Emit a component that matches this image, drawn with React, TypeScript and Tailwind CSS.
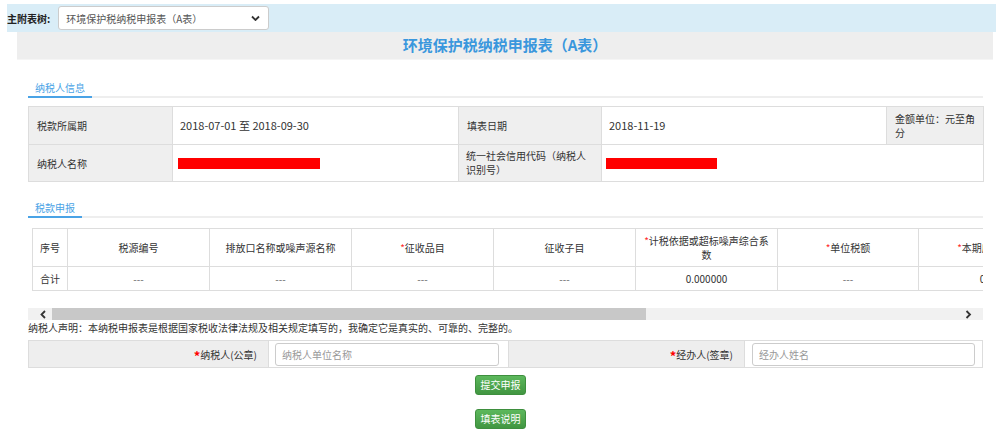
import React from "react";

const Req = () => <span className="text-[#ff2a2a]">*</span>;

const Chevron = ({ dir }: { dir: "down" | "left" | "right" }) => {
  const d = dir === "down" ? "M1 1.5l3.5 3.5 3.5-3.5" : dir === "left" ? "M5 1L1.5 4.5 5 8" : "M1.5 1L5 4.5 1.5 8";
  const vb = dir === "down" ? "0 0 9 6" : "0 0 7 9";
  return (
    <svg viewBox={vb} className={dir === "down" ? "w-[9px] h-[6px]" : "w-[7px] h-[9px]"}>
      <path d={d} fill="none" stroke="#333" strokeWidth="1.8" />
    </svg>
  );
};

const Tab = ({ label }: { label: string }) => (
  <div className="flex border-b-2 border-[#eeeeee]">
    <div className="-mb-[2px] h-[19px] px-[7px] border-b-2 border-[#4aa3e6] text-[10px] leading-[17px] text-[#4aa3e6]">
      {label}
    </div>
  </div>
);

const taxCols: { w: number; label: React.ReactNode; value: string }[] = [
  { w: 35, label: "序号", value: "合计" },
  { w: 142, label: "税源编号", value: "---" },
  { w: 142, label: "排放口名称或噪声源名称", value: "---" },
  { w: 142, label: <><Req />征收品目</>, value: "---" },
  { w: 142, label: "征收子目", value: "---" },
  { w: 142, label: <><Req />计税依据或超标噪声综合系数</>, value: "0.000000" },
  { w: 141, label: <><Req />单位税额</>, value: "---" },
  { w: 142, label: <><Req />本期应纳税额</>, value: "0.00" },
  { w: 142, label: "本期减免税额", value: "0.00" },
  { w: 142, label: "本期已缴税额", value: "0.00" },
];

export default function App() {
  return (
    <div className="w-[996px] h-[447px] overflow-hidden bg-white text-[#333] font-['Noto_Sans_CJK_SC',sans-serif]">
      {/* 主附表树 */}
      <div className="ml-[7px] mt-[4px] h-[28px] bg-[#d9edf7] flex items-center">
        <span className="text-[10px] font-bold text-[#222]">主附表树:</span>
        <div className="ml-[8px] w-[211px] h-[24px] bg-white border border-[#cccccc] rounded-[3px] flex items-center justify-between pl-[7px] pr-[8px] text-[10px] text-[#555]">
          <span>环境保护税纳税申报表（A表）</span>
          <Chevron dir="down" />
        </div>
      </div>

      {/* Title */}
      <div className="ml-[17px] w-[976px] h-[28px] bg-[#eeeeee] border-b border-[#f5f5f5] flex items-center justify-center text-[15px] font-bold text-[#3a97dd]">
        环境保护税纳税申报表（A表）
      </div>

      <div className="ml-[28px] w-[955px]">
        {/* 纳税人信息 */}
        <div className="mt-[19px]">
          <Tab label="纳税人信息" />
        </div>

        <table className="mt-[8px] w-[955px] table-fixed text-[10px]">
          <colgroup>
            <col className="w-[144px]" />
            <col className="w-[286px]" />
            <col className="w-[143px]" />
            <col className="w-[285px]" />
            <col className="w-[97px]" />
          </colgroup>
          <tbody>
            <tr className="h-[38px]">
              <td className="border border-[#dddddd] bg-[#efefef] px-[8px]">税款所属期</td>
              <td className="border border-[#dddddd] px-[7px] text-[11px]">2018-07-01 至 2018-09-30</td>
              <td className="border border-[#dddddd] bg-[#efefef] px-[8px]">填表日期</td>
              <td className="border border-[#dddddd] px-[7px] text-[11px]">2018-11-19</td>
              <td className="border border-[#dddddd] bg-[#efefef] px-[8px] leading-[14px]">金额单位：元至角分</td>
            </tr>
            <tr className="h-[37px]">
              <td className="border border-[#dddddd] bg-[#efefef] px-[8px]">纳税人名称</td>
              <td className="border border-[#dddddd] px-[5px]">
                <div className="w-[142px] h-[11px] bg-[#ff0000]" />
              </td>
              <td className="border border-[#dddddd] bg-[#efefef] px-[7px] leading-[14px]">统一社会信用代码（纳税人识别号）</td>
              <td colSpan={2} className="border border-[#dddddd] px-[4px]">
                <div className="w-[111px] h-[11px] bg-[#ff0000]" />
              </td>
            </tr>
          </tbody>
        </table>

        {/* 税款申报 */}
        <div className="mt-[17px]">
          <Tab label="税款申报" />
        </div>

        <div className="mt-[10px] pl-[4px] overflow-hidden">
          <table className="w-[1312px] table-fixed text-[10px] text-center">
            <colgroup>
              {taxCols.map((c, i) => (
                <col key={i} style={{ width: c.w }} />
              ))}
            </colgroup>
            <tbody>
              <tr className="h-[38px]">
                {taxCols.map((c, i) => (
                  <td key={i} className="border border-[#dddddd] px-[7px] leading-[14px]">
                    {c.label}
                  </td>
                ))}
              </tr>
              <tr className="h-[24px]">
                {taxCols.map((c, i) => (
                  <td key={i} className={`border border-[#dddddd] px-[4px] ${c.value === "---" ? "text-[#666]" : ""}`}>
                    {c.value}
                  </td>
                ))}
              </tr>
            </tbody>
          </table>
        </div>

        {/* scrollbar */}
        <div className="mt-[17px] h-[12px] bg-[#f1f1f1] flex items-center">
          <div className="w-[24px] h-full flex items-center justify-center pl-[6px]">
            <Chevron dir="left" />
          </div>
          <div className="w-[594px] h-full bg-[#c8c8c8]" />
          <div className="flex-1" />
          <div className="w-[24px] h-full flex items-center justify-center pr-[6px]">
            <Chevron dir="right" />
          </div>
        </div>

        <p className="mt-[1px] text-[10px] leading-[13px]">
          纳税人声明：本纳税申报表是根据国家税收法律法规及相关规定填写的，我确定它是真实的、可靠的、完整的。
        </p>

        {/* 签章 */}
        <div className="mt-[6px] grid grid-cols-[239px_240px_236px_240px] h-[28px] border border-[#dddddd] text-[10px]">
          <div className="bg-[#eeeeee] flex items-center justify-end pr-[11px]">
            <span className="text-[#ff0000] font-bold text-[13px] leading-none mt-[3px]">*</span>
            <span>纳税人(公章)</span>
          </div>
          <div className="border-l border-[#dddddd] pl-[6px] pr-[9px] flex items-center">
            <div className="w-full h-[23px] border border-[#cccccc] rounded-[3px] flex items-center pl-[6px] text-[#999]">
              纳税人单位名称
            </div>
          </div>
          <div className="border-l border-[#dddddd] bg-[#eeeeee] flex items-center justify-end pr-[11px]">
            <span className="text-[#ff0000] font-bold text-[13px] leading-none mt-[3px]">*</span>
            <span>经办人(签章)</span>
          </div>
          <div className="border-l border-[#dddddd] pl-[7px] pr-[9px] flex items-center">
            <div className="w-full h-[23px] border border-[#cccccc] rounded-[3px] flex items-center pl-[6px] text-[#999]">
              经办人姓名
            </div>
          </div>
        </div>
      </div>

      {/* buttons */}
      <div className="mt-[7px] flex flex-col items-center gap-[14px] pl-[5px]">
        <button className="w-[51px] h-[20px] rounded-[3px] bg-linear-to-b from-[#5cb85c] to-[#419641] border border-[#3e8f3e] text-white text-[10px] leading-none">
          提交申报
        </button>
        <button className="w-[51px] h-[20px] rounded-[3px] bg-linear-to-b from-[#5cb85c] to-[#419641] border border-[#3e8f3e] text-white text-[10px] leading-none">
          填表说明
        </button>
      </div>
    </div>
  );
}
